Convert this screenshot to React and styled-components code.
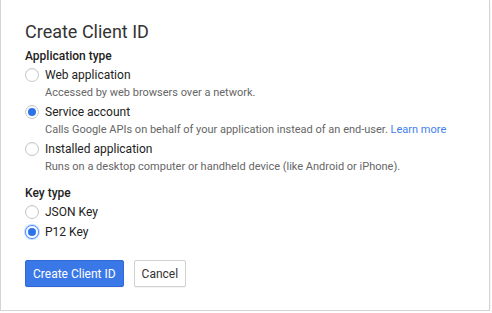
import styled, { createGlobalStyle } from "styled-components";

const GlobalStyle = createGlobalStyle`
    html, body {
        margin: 0;
        padding: 0;
        background: #fff;
        font-family: Roboto, "Liberation Sans", Arial, sans-serif;
    }
`;

const applicationTypes = [
    { label: "Web application", desc: "Accessed by web browsers over a network." },
    { label: "Service account", desc: "Calls Google APIs on behalf of your application instead of an end-user.", link: "Learn more", checked: true },
    { label: "Installed application", desc: "Runs on a desktop computer or handheld device (like Android or iPhone)." },
];

const keyTypes = [
    { label: "JSON Key" },
    { label: "P12 Key", checked: true, focused: true },
];

export default function App() {
    return (
        <>
            <GlobalStyle />
            <Dialog>
                <Title>Create Client ID</Title>

                <SectionLabel>Application type</SectionLabel>
                <Options>
                    {applicationTypes.map((opt) => (
                        <Option key={opt.label}>
                            <Row>
                                <Radio $checked={opt.checked} />
                                <Label>{opt.label}</Label>
                            </Row>
                            <Desc>
                                {opt.desc}
                                {opt.link && <> <Link href="#">{opt.link}</Link></>}
                            </Desc>
                        </Option>
                    ))}
                </Options>

                <SectionLabel $top={8}>Key type</SectionLabel>
                <Options>
                    {keyTypes.map((opt) => (
                        <Option key={opt.label} $gap={2}>
                            <Row>
                                <Radio $checked={opt.checked} $focused={opt.focused} />
                                <Label>{opt.label}</Label>
                            </Row>
                        </Option>
                    ))}
                </Options>

                <Buttons>
                    <PrimaryButton>Create Client ID</PrimaryButton>
                    <Button>Cancel</Button>
                </Buttons>
            </Dialog>
        </>
    );
}

const Dialog = styled.div`
    box-sizing: border-box;
    width: 490px;
    height: 311px;
    padding: 22px 24px 0 24px;
    background: #fff;
    border: 1px solid #d4d4d4;
    border-top: none;
    box-shadow: 0 1px 2px rgba(0, 0, 0, 0.1);
`;

const Title = styled.div`
    font-size: 18px;
    line-height: 20px;
    color: #333;
`;

const SectionLabel = styled.div`
    margin-top: ${(p) => p.$top ?? 6}px;
    font-size: 12px;
    line-height: 16px;
    font-weight: 500;
    color: #222;
`;

const Options = styled.div`
    display: flex;
    flex-direction: column;
    margin-top: 2px;
`;

const Option = styled.div`
    margin-bottom: ${(p) => p.$gap ?? 2}px;
`;

const Row = styled.div`
    display: flex;
    align-items: center;
    height: 18px;
`;

const Radio = styled.span`
    box-sizing: border-box;
    width: 14px;
    height: 14px;
    margin-right: 6px;
    border-radius: 50%;
    border: 1px solid ${(p) => (p.$focused ? "#4d90fe" : "#c6c6c6")};
    background: #fff;
    display: flex;
    align-items: center;
    justify-content: center;
    box-shadow: ${(p) => (p.$focused ? "0 0 0 1px rgba(77,144,254,0.35)" : "inset 0 1px 1px rgba(0,0,0,0.05)")};

    &::after {
        content: "";
        display: ${(p) => (p.$checked ? "block" : "none")};
        width: 8px;
        height: 8px;
        border-radius: 50%;
        background: #2d72e8;
    }
`;

const Label = styled.span`
    font-size: 12px;
    color: #222;
`;

const Desc = styled.div`
    margin-top: 1px;
    padding-left: 20px;
    font-size: 11px;
    line-height: 16px;
    color: #666;
`;

const Link = styled.a`
    color: #427fed;
    text-decoration: none;
`;

const Buttons = styled.div`
    display: flex;
    gap: 10px;
    margin-top: 17px;
`;

const Button = styled.button`
    box-sizing: border-box;
    height: 27px;
    padding: 0 7px;
    font-family: Roboto, "Liberation Sans", Arial, sans-serif;
    font-size: 12px;
    color: #333;
    background: #fff;
    border: 1px solid #d0d0d0;
    border-radius: 2px;
    box-shadow: 0 1px 1px rgba(0, 0, 0, 0.05);
`;

const PrimaryButton = styled(Button)`
    color: #fff;
    background: #3b78e7;
    border-color: #3367d6;
`;
